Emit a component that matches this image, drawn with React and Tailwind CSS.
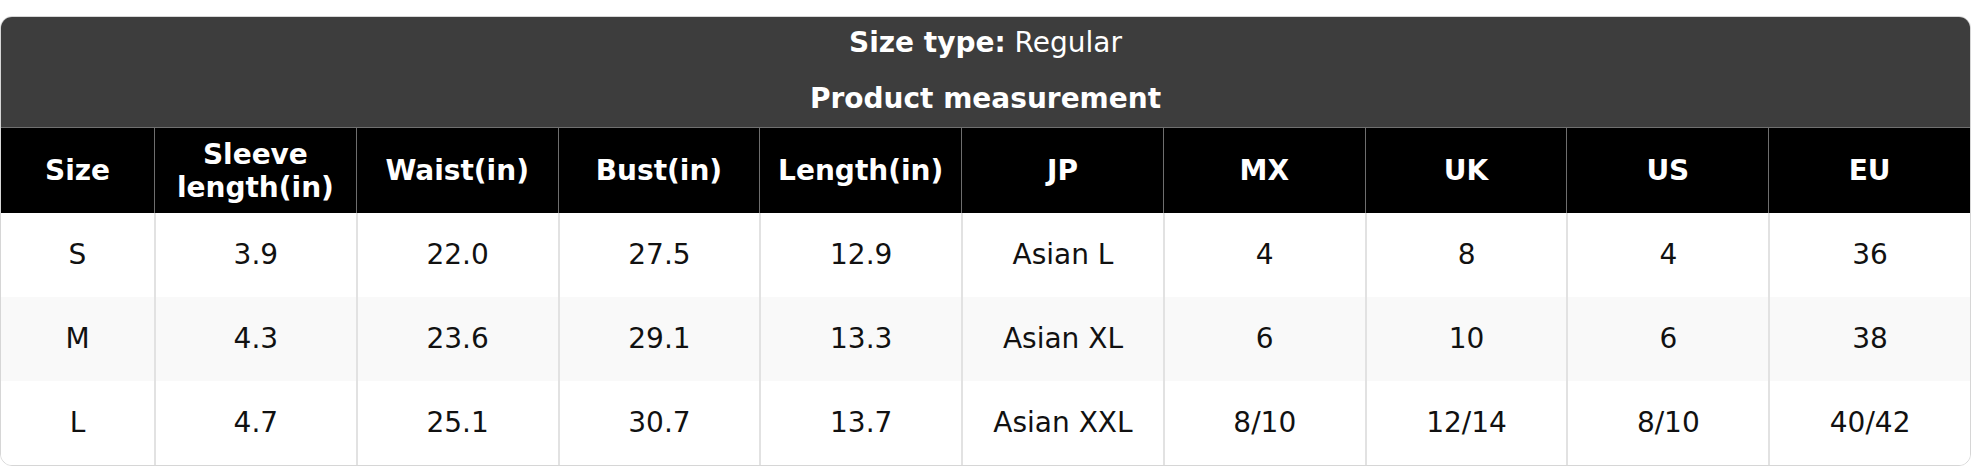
import React from 'react';

const columns = ['Size', 'Sleeve length(in)', 'Waist(in)', 'Bust(in)', 'Length(in)', 'JP', 'MX', 'UK', 'US', 'EU'];

const rows = [
  ['S', '3.9', '22.0', '27.5', '12.9', 'Asian L', '4', '8', '4', '36'],
  ['M', '4.3', '23.6', '29.1', '13.3', 'Asian XL', '6', '10', '6', '38'],
  ['L', '4.7', '25.1', '30.7', '13.7', 'Asian XXL', '8/10', '12/14', '8/10', '40/42'],
];

const App = () => {
  return (
    <div className="min-h-screen bg-white pt-4" style={{ fontFamily: '"DejaVu Sans", sans-serif' }}>
      <div className="w-[1971px] rounded-xl border border-[#d6d6d6] overflow-hidden">
        {/* Title block */}
        <div className="h-[111px] pt-[8px] bg-[#3d3d3d] text-white border-b border-[#707070]">
          <div className="h-[36px] flex items-center justify-center text-[28px]">
            <span className="font-bold">Size type:</span>
            <span>&nbsp;Regular</span>
          </div>
          <div className="h-[36px] mt-[20px] flex items-center justify-center text-[28px] font-bold">
            Product measurement
          </div>
        </div>

        {/* Column headers */}
        <div className="grid grid-cols-[153px_repeat(9,1fr)] h-[85px] bg-black text-white">
          {columns.map((col, i) => (
            <div
              key={col}
              className={`flex items-center justify-center text-center text-[28px] leading-[33px] font-bold px-2 ${i > 0 ? 'border-l border-[#6e6e6e]' : ''}`}
            >
              {col === 'Sleeve length(in)' ? (
                <span>Sleeve<br />length(in)</span>
              ) : col}
            </div>
          ))}
        </div>

        {/* Rows */}
        {rows.map((row, r) => (
          <div
            key={row[0]}
            className={`grid grid-cols-[153px_repeat(9,1fr)] h-[84px] text-[#111] ${r === 1 ? 'bg-[#f9f9f9]' : 'bg-white'}`}
          >
            {row.map((cell, i) => (
              <div
                key={i}
                className={`flex items-center justify-center text-[28px] ${i > 0 ? 'border-l-2 border-[#e2e2e2]' : ''}`}
              >
                {cell}
              </div>
            ))}
          </div>
        ))}
      </div>
    </div>
  );
};

export default App;
